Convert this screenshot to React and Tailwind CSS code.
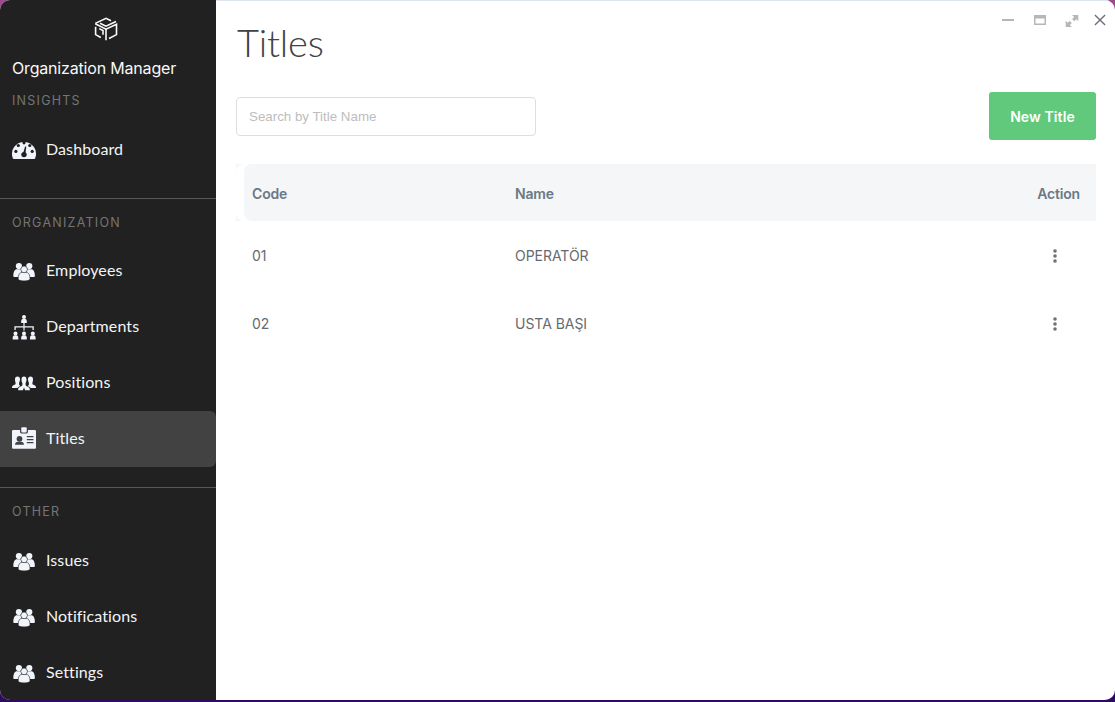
import React from "react";

function Logo() {
  return (
    <svg viewBox="0 0 24 24" className="h-[24px] w-[24px]" fill="none" stroke="#fafafa" strokeWidth="1.6">
      <path d="M1.300 6.400 12 1.300l5 2.500" />
      <path d="M6 6.200 12 9.200 22 4.600" />
      <path d="M1.300 6.800 12 12.200 22.500 7.200V17.600L15 21.500" />
      <path d="M12 12v11.300M1.600 9.800v7.800l5.200 2.900M5.200 11.600 9 13.500V17.800" />
    </svg>
  );
}

function GaugeIcon() {
  return (
    <svg viewBox="0 0 24 20" className="relative -top-px h-[20px] w-[24px]">
      <path fill="#f1f4fa" d="M1.800 20A1.500 1.500 0 0 1 .8 19.200 12 12 0 1 1 23.200 19.200 1.500 1.500 0 0 1 22.200 20Z" />
      <g fill="#212121">
        <circle cx="3.900" cy="12.400" r="1.600" />
        <circle cx="6.300" cy="6.500" r="1.600" />
        <circle cx="12" cy="3.800" r="1.600" />
        <circle cx="17.800" cy="6.500" r="1.600" />
        <circle cx="20.200" cy="12.400" r="1.600" />
        <circle cx="12" cy="15.600" r="2.700" />
        <path d="m11 14.500 2.100-7.100 1.200.3-.9 7.300Z" />
      </g>
    </svg>
  );
}

function PeopleIcon() {
  return (
    <svg viewBox="0 0 24 20" className="relative top-px h-[20px] w-[24px]" fill="#f1f4fa">
      <circle cx="6.900" cy="4" r="3.100" />
      <circle cx="17.300" cy="4" r="3.100" />
      <path d="M1.300 14.200c0-4.300 1.200-7 3.800-7h4.300V15H3c-1.100 0-1.700-.3-1.700-.8ZM22.900 14.200c0-4.300-1.200-7-3.800-7h-4.300V15h6.400c1.100 0 1.700-.3 1.700-.8Z" />
      <g stroke="#212121" strokeWidth="0.600">
        <path d="M6.200 16.800c0-4.200 1.500-6.500 4-6.500H14c2.500 0 4 2.300 4 6.500 0 1.400-2.200 2.100-5.900 2.100s-5.900-.7-5.900-2.100Z" />
        <circle cx="12.100" cy="7.400" r="3.300" />
      </g>
    </svg>
  );
}

function Person({ x, y }) {
  return (
    <g transform={`translate(${x} ${y})`}>
      <circle cx="0" cy="2" r="2" />
      <path d="M-2.800 8V6.200C-2.800 4.800-2 3.700-.9 3.700H.9C2 3.700 2.800 4.800 2.800 6.200V8Z" />
    </g>
  );
}

function HierarchyIcon() {
  return (
    <svg viewBox="0 0 24 26" className="relative top-px h-[26px] w-[24px]" fill="#f1f4fa">
      <Person x={12} y={0} />
      <Person x={3.500} y={16.500} />
      <Person x={12} y={16.500} />
      <Person x={20.800} y={16.500} />
      <path d="M11.400 8h1.200v3.200h9.200v3.800h-1.300v-2.400h-7.900v3h-1.200v-3H3.700V15H2.400v-3.800h9Z" />
    </svg>
  );
}

function TeamIcon() {
  return (
    <svg viewBox="0 0 24 15" className="h-[15px] w-[24px]" fill="#f1f4fa">
      <path d="M5.500.5c1.600 0 2.500 1 2.500 2.800 0 1.500-.5 2.700-.9 3.400v2l1.100 1.300-2 1.200-.9.900H0c0-1.900.6-2.500 1.900-3 1.200-.4 1.700-.7 1.700-1.500V6.700C3.200 6 3 4.800 3 3.300 3 1.500 3.900.5 5.500.5Z" />
      <path d="M18.500.5C16.900.5 16 1.500 16 3.300c0 1.500.5 2.700.9 3.400v2L15.800 10l2 1.200.9.900H24c0-1.900-.6-2.500-1.900-3-1.200-.4-1.700-.7-1.700-1.500V6.700c.4-.7.6-1.900.6-3.400 0-1.800-.9-2.800-2.500-2.800Z" />
      <path d="M12 .5c1.700 0 2.500 1.100 2.500 3 0 1.600-.5 2.900-.9 3.600v1.700c0 .9.900 1.500 2.200 2 1.500.6 2.100 1.300 2.100 3.400h-4.800L12 11.500l-1.100 2.700H6.100c0-2.100.6-2.800 2.100-3.400 1.300-.5 2.200-1.100 2.200-2V7.100c-.4-.7-.9-2-.9-3.600 0-1.900.8-3 2.500-3Z" />
    </svg>
  );
}

function BadgeIcon() {
  return (
    <svg viewBox="0 0 24 22" className="relative -top-px h-[22px] w-[24px]">
      <path fill="#f1f4fa" d="M1.500 3H8v1.500C8 5.900 8.700 6.600 10 6.600h4c1.300 0 2-.7 2-2.100V3h6.500C23.500 3 24 3.500 24 4.500v15.700c0 1-.5 1.500-1.500 1.500h-21C.5 21.700 0 21.200 0 20.200V4.500C0 3.500.5 3 1.500 3Z" />
      <rect x="9.300" y="0.300" width="5.400" height="5.300" rx="1" fill="#f1f4fa" />
      <g fill="#424242">
        <circle cx="7.500" cy="11.800" r="2.900" />
        <path d="M3 17.800c0-2.100 1.300-2.900 3-3h3c1.700.1 3 .9 3 3ZM14.800 9.100h6.700v1.200h-6.700ZM14.800 12.100h6.700v1.200h-6.700ZM14.800 15.100h6.700v1.200h-6.700Z" />
      </g>
    </svg>
  );
}

function NavItem({ icon, label, active }) {
  return (
    <a className={active ? "flex h-14 items-center rounded-r-md bg-[#424242] pl-3" : "flex h-14 items-center pl-3"}>
      <span className="flex w-6 shrink-0 justify-center">{icon}</span>
      <span className="ml-[10px] pb-[2px] font-['Lato',sans-serif] text-[16px] leading-6 tracking-[0.100px] text-[#f3f4f6]">{label}</span>
    </a>
  );
}

function SectionLabel({ children }) {
  return <div className="pt-px pl-3 font-['Inter',sans-serif] text-[12.500px] leading-5 tracking-[1.250px] text-[#757575]">{children}</div>;
}

function Sidebar() {
  return (
    <aside className="flex w-[216px] shrink-0 flex-col bg-[#212121]">
      <div className="flex justify-center pt-[17px] pr-1">
        <Logo />
      </div>
      <div className="mt-[15px] pl-3 font-['Inter',sans-serif] text-[16px] leading-6 tracking-[-0.180px] text-[#f8f8f8]">Organization Manager</div>
      <div className="mt-[10px]"><SectionLabel>INSIGHTS</SectionLabel></div>
      <div className="mt-[11px]"><NavItem icon={<GaugeIcon />} label="Dashboard" /></div>
      <div className="mt-5 border-t border-[#575757] pt-[13px]"><SectionLabel>ORGANIZATION</SectionLabel></div>
      <nav className="mt-[10px]">
        <NavItem icon={<PeopleIcon />} label="Employees" />
        <NavItem icon={<HierarchyIcon />} label="Departments" />
        <NavItem icon={<TeamIcon />} label="Positions" />
        <NavItem icon={<BadgeIcon />} label="Titles" active />
      </nav>
      <div className="mt-5 border-t border-[#575757] pt-[13px]"><SectionLabel>OTHER</SectionLabel></div>
      <nav className="mt-[11px]">
        <NavItem icon={<PeopleIcon />} label="Issues" />
        <NavItem icon={<PeopleIcon />} label="Notifications" />
        <NavItem icon={<PeopleIcon />} label="Settings" />
      </nav>
    </aside>
  );
}

function WindowControls() {
  return (
    <div className="flex items-start pt-[11px]">
      <svg viewBox="0 0 12 14" className="mr-[20px] h-[14px] w-[12px]">
        <path d="M0 8h12" stroke="#b4b6b9" strokeWidth="2" />
      </svg>
      <svg viewBox="0 0 12 14" className="mr-[20px] h-[14px] w-[12px]">
        <path fill="#b4b6b9" fillRule="evenodd" d="M0 3h12v10H0ZM1.500 6.500v5h9v-5Z" />
      </svg>
      <svg viewBox="0 0 12 14" className="mr-[16px] h-[14px] w-[12px] overflow-visible" fill="#b4b6b9">
        <path d="M6 3h6.300v6.300l-2-2-2 2-2.200-2.200 2-2Z" />
        <path d="M-.300 15V8.800l2 2 1.900-1.900 2.200 2.200-1.900 1.900 2 2Z" />
      </svg>
      <svg viewBox="0 0 12 14" className="h-[14px] w-[12px]" fill="none" stroke="#6b7077" strokeWidth="1.400">
        <path d="m.9 3 10.200 10M11.100 3 .9 13" />
      </svg>
    </div>
  );
}

function Row({ code, name }) {
  return (
    <div className="flex h-[68px] items-center pt-px pl-4 font-['Inter',sans-serif] text-[14px] tracking-[-0.040px] text-[#666a70]">
      <div className="w-[263px]">{code}</div>
      <div className="flex-1">{name}</div>
      <svg viewBox="0 0 4 14" className="mr-[39px] h-[14px] w-[4px]" fill="#707070">
        <circle cx="2" cy="2" r="1.800" />
        <circle cx="2" cy="7" r="1.800" />
        <circle cx="2" cy="12" r="1.800" />
      </svg>
    </div>
  );
}

export default function App() {
  return (
    <div className="h-[702px] w-[1115px] bg-linear-to-b from-[#a04a8e] to-[#2d0b63] to-60%">
      <div className="flex h-[700px] overflow-hidden rounded-[10px] bg-white">
        <Sidebar />
        <main className="min-w-0 flex-1 border-t border-[#dfe5f0] pl-5">
          <div className="flex h-[91px] justify-between pr-[9px]">
            <h1 className="pt-[16px] pl-px font-['Lato',sans-serif] text-[38px] leading-[50px] font-light tracking-[-0.200px] text-[#424242]">Titles</h1>
            <WindowControls />
          </div>
          <div className="pr-[19px]">
            <div className="flex items-center justify-between">
              <input
                className="mt-px h-[39px] w-[300px] rounded border border-[#dedede] px-3 font-['Liberation_Sans',sans-serif] text-[13.333px] outline-none placeholder:text-[#bdbdbd]"
                placeholder="Search by Title Name"
              />
              <button className="h-12 w-[107px] rounded-[3px] bg-[#60c97c] font-['Inter',sans-serif] text-[14px] font-semibold tracking-[0.100px] text-white">
                New Title
              </button>
            </div>
            <div className="mt-6 bg-[#f4f6f8]">
              <div className="rounded-l-lg bg-white pl-2">
                <div className="flex h-[57px] items-center rounded-l-lg bg-[#f4f6f8] pt-[2px] pr-4 pl-2 font-['Inter',sans-serif] text-[14px] font-semibold tracking-[-0.180px] text-[#6b7886]">
                  <div className="w-[263px]">Code</div>
                  <div className="flex-1">Name</div>
                  <div>Action</div>
                </div>
              </div>
            </div>
            <Row code="01" name="OPERATÖR" />
            <Row code="02" name="USTA BAŞI" />
          </div>
        </main>
      </div>
    </div>
  );
}
